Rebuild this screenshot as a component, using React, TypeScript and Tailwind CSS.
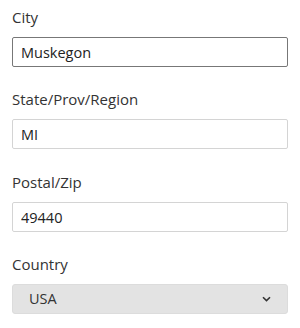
import React from 'react';

const fields = [
  { label: 'City', value: 'Muskegon', focused: true },
  { label: 'State/Prov/Region', value: 'MI', focused: false },
  { label: 'Postal/Zip', value: '49440', focused: false },
];

export default function App() {
  return (
    <div
      className="w-[300px] h-[328px] bg-white px-3 pt-[7px] text-[#333]"
      style={{ fontFamily: '"Open Sans", "Liberation Sans", sans-serif' }}
    >
      {fields.map((f, i) => (
        <div key={f.label} className={i === 1 ? 'mb-[23px]' : 'mb-[22px]'}>
          <label className="block text-[15px] leading-5 mb-[10px]">{f.label}</label>
          <input
            readOnly
            value={f.value}
            className={`block w-[276px] h-[30px] px-2 text-[14.5px] text-[#222] rounded-[2px] border outline-none ${
              f.focused ? 'border-[#777]' : 'border-[#d4d4d4]'
            }`}
          />
        </div>
      ))}

      {/* Country */}
      <div>
        <label className="block text-[15px] leading-5 mb-[10px]">Country</label>
        <div className="flex items-center justify-between w-[276px] h-[30px] pl-4 pr-[16px] rounded-[3px] bg-[#e3e3e3] border border-[#dcdcdc]">
          <span className="text-[14.5px] text-[#333]">USA</span>
          <svg width="9" height="6" viewBox="0 0 9 6" className="text-[#333]">
            <path d="M1 1.2 L4.5 4.6 L8 1.2" fill="none" stroke="currentColor" strokeWidth="1.6" />
          </svg>
        </div>
      </div>
    </div>
  );
}
